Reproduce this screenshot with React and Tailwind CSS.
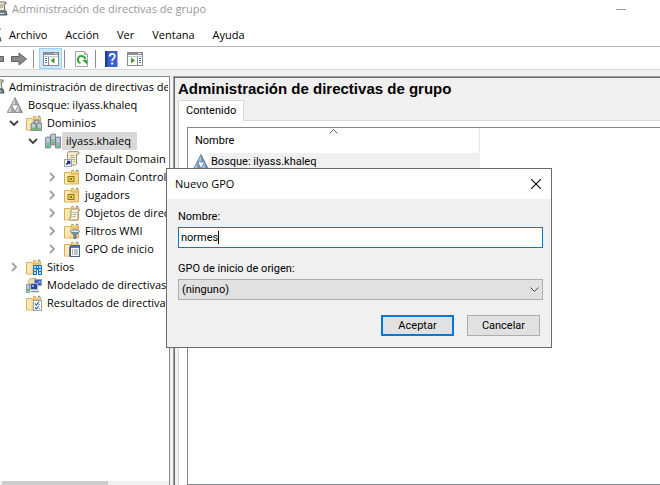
import React from "react";

const svgProps = { width: 16, height: 16, viewBox: "0 0 16 16", "aria-hidden": true, className: "shrink-0" };

function ConsoleIcon() {
  return (
    <svg {...svgProps}>
      <path d="M5 1h9v2h-2l1 7H5z" fill="#f4ecd0" stroke="#6b6b6b" />
      <path d="M7 4h4M7 6h4" stroke="#8a8a8a" />
      <path d="M3 10h11l1 4H2z" fill="#7a8894" stroke="#4c565e" />
      <rect x="4" y="12" width="8" height="1" fill="#cfd8df" />
    </svg>
  );
}

function ForestIcon({ blue }) {
  const light = blue ? "#a9c6de" : "#d2d2d2";
  const mid = blue ? "#6f96b8" : "#a2a2a2";
  const edge = blue ? "#4a6f92" : "#7d7d7d";
  return (
    <svg {...svgProps}>
      <path d="M8 .5 15.700 15.500H.3z" fill={mid} />
      <path d="M8 .8 4.500 7.800H8zM4.200 8 .7 15H4.200zM11.800 8 8.300 15h3.500z" fill={light} />
      <path d="M8 .5 15.700 15.500H.3z" fill="none" stroke={edge} strokeWidth=".7" />
      <path d="M4.600 8h6.800L8 14.600z" fill="#fff" stroke={edge} strokeWidth=".6" />
    </svg>
  );
}

function FolderShape() {
  return (
    <>
      <path d="M7.500 1.500h7v12h-7z" fill="#f2cf78" stroke="#d9ad52" />
      <path d="M10 .8h4.500v1.400H10z" fill="#fff" />
      <path d="M12 .8h1.800v1.400H12z" fill="#3f8fdc" />
      <path d="M.5 3.500h5.500l1.500 1.500h7v10H.5z" fill="#f6d98c" stroke="#d9ad52" />
      <path d="M1 4h4.500v10.500H1z" fill="#fbe9b5" />
    </>
  );
}

function Server({ x, y, h }) {
  return (
    <g>
      <path d={`M${x} ${y + 1}l1-1h4v${h}h-5z`} fill="#a3b0ba" stroke="#63737f" strokeWidth=".7" />
      <path d={`M${x + 1} ${y + 2}h3M${x + 1} ${y + 4}h3`} stroke="#eef3f6" strokeWidth=".9" />
      <rect x={x + 1.5} y={y + h - 3} width="2" height="2" fill="#3ddc35" />
    </g>
  );
}

function DomainsIcon() {
  return (
    <svg {...svgProps}>
      <FolderShape />
      <Server x={8} y={5} h={8} />
      <Server x={5} y={8} h={7.5} />
      <Server x={10.7} y={8} h={7.5} />
    </svg>
  );
}

function DomainIcon() {
  return (
    <svg {...svgProps}>
      <Server x={5.5} y={1} h={11} />
      <Server x={0.5} y={4} h={11} />
      <Server x={10.5} y={4} h={11} />
    </svg>
  );
}

function Scroll() {
  return (
    <>
      <path d="M7 5.500c0-1 .6-1.500 1.500-1.500H15c.8 0 .8 2 0 2h-1v7.500c0 1-.6 1.500-1.500 1.500H6c-1 0-1-2.500 0-2.500h1z" fill="#f8f4e4" stroke="#8f8870" strokeWidth=".9" />
      <path d="M8.500 7.500h4M8.500 9.500h4M8.500 11.500h3" stroke="#aaa48e" strokeWidth=".9" />
    </>
  );
}

function PolicyLinkIcon() {
  return (
    <svg {...svgProps}>
      <path d="M3.500 2.500C3.500 1.500 4 .7 5 .7h9c1.300 0 1.300 2.600 0 2.600h-1.500V12c0 1.200-.7 2-2 2H4z" fill="#f8f0cc" stroke="#8f8870" />
      <path d="M6 4.500h5M6 6.500h5M8 8.500h3M9 10.500h2" stroke="#b5ac8c" />
      <rect x=".5" y="8.500" width="7" height="7" fill="#fff" stroke="#9aa5ad" />
      <path d="M2.200 13.800 5 11M3 10.500h2.700v2.700" fill="none" stroke="#1a2b8f" strokeWidth="1.500" />
    </svg>
  );
}

function OuIcon() {
  return (
    <svg {...svgProps}>
      <FolderShape />
      <rect x="4" y="7.500" width="6" height="5" fill="#e6cf4d" stroke="#8d7a16" />
      <rect x="6" y="9" width="2" height="2" fill="#8d7a16" />
    </svg>
  );
}

function PolicyObjectsIcon() {
  return (
    <svg {...svgProps}>
      <FolderShape />
      <Scroll />
    </svg>
  );
}

function FiltersIcon() {
  return (
    <svg {...svgProps}>
      <FolderShape />
      <path d="M6.500 8.500 10 12v3.500h2V12l3.500-3.500z" fill="#6f95ba" stroke="#42607e" strokeWidth=".7" />
      <ellipse cx="11" cy="8.300" rx="4.600" ry="1.500" fill="#d5e5f2" stroke="#42607e" strokeWidth=".7" />
    </svg>
  );
}

function StarterIcon() {
  return (
    <svg {...svgProps}>
      <FolderShape />
      <path d="M5 6h2v9.500H5z" fill="#5c7288" />
      <rect x="6.500" y="4.500" width="9" height="11" fill="#f5f8fb" stroke="#47617c" />
      <path d="M7 5h8v2H7z" fill="#4f7ba6" />
      <path d="M10 9h4M10 11h4M10 13h4" stroke="#7e8e9e" />
      <path d="M8 9h1M8 11h1M8 13h1" stroke="#c03a2b" />
    </svg>
  );
}

function SitesIcon() {
  return (
    <svg {...svgProps}>
      <FolderShape />
      <rect x="7" y="6" width="9" height="10" fill="#1f78c4" />
      <path d="M8 7h2v2H8zM11 7h1v2h-1zM13 7h2v2h-2zM8 10h2v2H8zM13 10h2v2h-2zM8 13h2v2H8zM13 13h2v2h-2z" fill="#a9dcf8" />
      <path d="M11 11h1v5h-1z" fill="#fff" />
    </svg>
  );
}

function ModelingIcon() {
  return (
    <svg {...svgProps}>
      <path d="M2 5 4 1.500h6l-1 5-5 2z" fill="#f3e2a6" stroke="#b3a066" strokeWidth=".8" />
      <rect x="8.500" y="2.500" width="7" height="6" fill="#3f5fc4" stroke="#9aa4ad" />
      <path d="M12.500 4h2v2h-2z" fill="#8fb1f5" />
      <rect x="4.500" y="6.500" width="7" height="6" fill="#2747b5" stroke="#b2bbc3" />
      <path d="M6 8h2v2H6z" fill="#8fb1f5" />
      <path d="M5 14.500h8" stroke="#8a949d" strokeWidth="1.500" />
      <path d="M.5 7.500h3v8h-3z" fill="#c6ced4" stroke="#76828c" strokeWidth=".8" />
      <rect x="1" y="12" width="2" height="2" fill="#3ddc35" />
    </svg>
  );
}

function ResultsIcon() {
  return (
    <svg {...svgProps}>
      <FolderShape />
      <rect x="7.500" y="5.500" width="8" height="10" fill="#fff" stroke="#9aa3ab" />
      <path d="M9 8.500 10.300 10 13 6.500M9 12.500l1.300 1.300L12.500 11" fill="none" stroke="#2566ad" strokeWidth="1.200" />
      <path d="M12.500 9.500H14M12.500 13.500H14" stroke="#8a949d" />
    </svg>
  );
}

function Chevron({ open }) {
  return (
    <svg width="10" height="10" viewBox="0 0 10 10" aria-hidden="true" className="shrink-0">
      {open ? (
        <path d="M1 3l4 4 4-4" fill="none" stroke="#404040" strokeWidth="1.800" />
      ) : (
        <path d="M3 1l4 4-4 4" fill="none" stroke="#a0a0a0" strokeWidth="1.800" />
      )}
    </svg>
  );
}

const tree = [
  { pad: "pl-[7px]", icon: <ForestIcon />, label: "Bosque: ilyass.khaleq", leaf: true },
  { pad: "pl-[9px]", icon: <DomainsIcon />, label: "Dominios", open: true },
  { pad: "pl-[28px]", icon: <DomainIcon />, label: "ilyass.khaleq", open: true, selected: true },
  { pad: "pl-[64px]", icon: <PolicyLinkIcon />, label: "Default Domain Policy", leaf: true },
  { pad: "pl-[47px]", icon: <OuIcon />, label: "Domain Controllers" },
  { pad: "pl-[47px]", icon: <OuIcon />, label: "jugadors" },
  { pad: "pl-[47px]", icon: <PolicyObjectsIcon />, label: "Objetos de directiva de grupo" },
  { pad: "pl-[47px]", icon: <FiltersIcon />, label: "Filtros WMI" },
  { pad: "pl-[47px]", icon: <StarterIcon />, label: "GPO de inicio" },
  { pad: "pl-[9px]", icon: <SitesIcon />, label: "Sitios" },
  { pad: "pl-[26px]", icon: <ModelingIcon />, label: "Modelado de directivas de grupo", leaf: true },
  { pad: "pl-[26px]", icon: <ResultsIcon />, label: "Resultados de directivas de grupo", leaf: true },
];

function TreeRow({ pad, icon, label, open, leaf, selected }) {
  return (
    <li role="treeitem" aria-selected={!!selected} className={"flex h-[18px] items-center whitespace-nowrap " + pad}>
      {!leaf && (
        <span className="mr-[7px] flex">
          <Chevron open={open} />
        </span>
      )}
      {icon}
      <span className={"ml-px h-[18px] pr-[6px] pl-1 leading-[18px] " + (selected ? "bg-[#d9d9d9]" : "")}>{label}</span>
    </li>
  );
}

function PaneIcon({ right }) {
  return (
    <svg {...svgProps}>
      <rect x=".5" y="1.500" width="15" height="13" fill="#fff" stroke="#8a8a8a" />
      <path d="M1 2h14v2H1z" fill="#8d9299" />
      <path d="M11 2.500h3" stroke="#e8e8e8" />
      <path d="M1 5.500h14" stroke="#c4c8cc" />
      {right ? (
        <>
          <path d="M10.500 6v8" stroke="#8a8a8a" />
          <path d="M12 7.500h2M12 9.500h2M12 11.500h2" stroke="#3f6fa8" />
          <path d="M4 6.500v6L8 9.500z" fill="#35a52c" />
        </>
      ) : (
        <>
          <path d="M5.500 6v8" stroke="#8a8a8a" />
          <path d="M2 7.500h2M2 9.500h2M2 11.500h2" stroke="#3f6fa8" />
          <path d="M11.500 6.500v6L7.500 9.500z" fill="#35a52c" />
        </>
      )}
    </svg>
  );
}

function RefreshIcon() {
  return (
    <svg {...svgProps}>
      <path d="M2.500.5h9l3 3v12h-12z" fill="#fff" stroke="#a5a5a5" />
      <path d="M11.500.5v3h3" fill="none" stroke="#a5a5a5" />
      <path d="M7.500 12.200A3.700 3.700 0 1 1 12.200 8.500" fill="none" stroke="#33a83a" strokeWidth="1.900" />
      <path d="M9.200 9h5v4.500z" fill="#33a83a" />
    </svg>
  );
}

function HelpIcon() {
  return (
    <svg {...svgProps}>
      <rect x="2" y="0" width="12.500" height="16" fill="#3a5fcb" />
      <path d="M2 0h2.500v16H2z" fill="#1f3c98" />
      <path d="M6.700 5.500C6.700 2 11.800 2 11.800 5.200 11.800 7.500 9.200 7.300 9.200 10" fill="none" stroke="#fff" strokeWidth="1.800" />
      <rect x="8.200" y="11.500" width="2" height="2" fill="#fff" />
    </svg>
  );
}

function ArrowShape({ back }) {
  return (
    <svg {...svgProps}>
      <path
        d={back ? "M15.500 5.500H8V2L1 8l7 6v-3.500h7.500z" : "M.5 5.500H8V2L15.500 8 8 14v-3.500H.5z"}
        fill="#8a8a8a"
        stroke="#5f5f5f"
      />
    </svg>
  );
}

function Separator() {
  return <span className="h-[18px] w-px shrink-0 bg-[#8d8d8d]" />;
}

function Toolbar() {
  return (
    <div role="toolbar" aria-label="Barra de herramientas" className="flex h-[23px] shrink-0 items-center overflow-hidden border-b border-[#d9d9d9] pt-px">
      <button aria-label="Atrás" className="-ml-3 flex"><ArrowShape back /></button>
      <button aria-label="Adelante" className="mr-[6px] ml-[7px] flex"><ArrowShape /></button>
      <Separator />
      <button aria-label="Mostrar árbol" className="mr-[2px] ml-[5px] flex h-[21px] w-[23px] items-center justify-center border border-[#99d1ff] bg-[#cce8ff]">
        <PaneIcon />
      </button>
      <Separator />
      <button aria-label="Actualizar" className="mr-[6px] ml-2 flex"><RefreshIcon /></button>
      <Separator />
      <button aria-label="Ayuda" className="mr-2 ml-[7px] flex"><HelpIcon /></button>
      <button aria-label="Panel de acciones" className="flex"><PaneIcon right /></button>
    </div>
  );
}

function ContentPane() {
  return (
    <main className="ml-[3px] flex min-w-0 flex-1 flex-col border-t border-l border-[#a0a0a0]">
      <div className="flex min-h-0 flex-1 flex-col border-t border-l border-[#696969] bg-[#f0f0f0] pl-[3px]">
        <h1 className="h-[22px] font-['Liberation_Sans',sans-serif] text-[15px] leading-[22px] font-bold whitespace-nowrap">
          Administración de directivas de grupo
        </h1>
        <div role="tablist" className="flex h-[21px] shrink-0">
          <button role="tab" aria-selected="true" className="border-t border-r border-l border-[#d9d9d9] bg-white px-[7px] font-['Roboto',sans-serif]">
            Contenido
          </button>
          <span className="flex-1 border-b border-[#d9d9d9]" />
        </div>
        <div className="flex min-h-0 flex-1 flex-col border-l border-[#d9d9d9] bg-white pt-[6px] pl-[8px]">
          <div className="flex-1 border-t border-b border-l border-[#828790] font-['Roboto',sans-serif]">
            <table className="w-[292px] table-fixed border-collapse">
              <thead>
                <tr>
                  <th className="relative h-[25px] border-r border-[#e5e5e5] p-0 pl-[7px] text-left font-normal">
                    <svg width="9" height="5" viewBox="0 0 9 5" aria-hidden="true" className="absolute inset-x-0 top-px mx-auto">
                      <path d="M.5 4.500l4-4 4 4" fill="none" stroke="#606060" />
                    </svg>
                    Nombre
                  </th>
                </tr>
              </thead>
              <tbody>
                <tr>
                  <td className="p-0">
                    <div className="flex h-[18px] items-center pl-[5px]">
                      <ForestIcon blue />
                      <span className="flex-1 bg-[#f0f0f0] pl-[2px] leading-[18px]">Bosque: ilyass.khaleq</span>
                    </div>
                  </td>
                </tr>
              </tbody>
            </table>
          </div>
        </div>
      </div>
    </main>
  );
}

function NewGpoDialog() {
  return (
    <div role="dialog" aria-labelledby="dlg-title" className="absolute top-[168px] left-[166px] w-[386px] border border-[#696b70] bg-[#f0f0f0] font-['Roboto',sans-serif]">
      <div className="flex h-[30px] items-center justify-between bg-white pr-[10px] pl-[8px]">
        <h2 id="dlg-title" className="font-['Open_Sans',sans-serif]">Nuevo GPO</h2>
        <button aria-label="Cerrar">
          <svg width="10" height="10" viewBox="0 0 10 10" aria-hidden="true">
            <path d="M0 0l10 10M10 0L0 10" stroke="#000" strokeWidth="1.100" />
          </svg>
        </button>
      </div>
      <form className="pt-[10px] pr-2 pb-[11px] pl-[11px]" onSubmit={(e) => e.preventDefault()}>
        <label htmlFor="gpo-name" className="block leading-[16px]">Nombre:</label>
        <div className="mt-[2px] flex h-[21px] items-center border border-[#0078d7] bg-white pl-[2px]">
          <input id="gpo-name" defaultValue="normes" className="[field-sizing:content] p-0 outline-none" />
          <span className="h-[13px] w-px bg-black" />
        </div>
        <label htmlFor="gpo-source" className="mt-[13px] block leading-[16px]">GPO de inicio de origen:</label>
        <div className="relative mt-[2px]">
          <select id="gpo-source" className="block h-[21px] w-full appearance-none border border-[#adadad] bg-[#e1e1e1] pl-[3px] leading-[16px]">
            <option>(ninguno)</option>
          </select>
          <svg width="9" height="6" viewBox="0 0 9 6" aria-hidden="true" className="pointer-events-none absolute top-[8px] right-[4px]">
            <path d="M.5.5l4 4 4-4" fill="none" stroke="#404040" />
          </svg>
        </div>
        <div className="mt-[15px] flex justify-end gap-[13px] pr-[3px]">
          <button type="submit" className="h-[21px] w-[73px] border-2 border-[#0078d7] bg-[#e1e1e1] leading-[16px]">Aceptar</button>
          <button type="button" className="h-[21px] w-[73px] border border-[#adadad] bg-[#e1e1e1] leading-[16px]">Cancelar</button>
        </div>
      </form>
    </div>
  );
}

export default function App() {
  return (
    <div className="relative flex h-screen flex-col overflow-hidden bg-white font-['Open_Sans',sans-serif] text-[11px] leading-[16px] text-black">
      <header className="flex h-[18px] shrink-0 items-center justify-between text-[#999999]">
        <div className="flex items-center">
          <span className="-ml-2 flex"><ConsoleIcon /></span>
          <span className="ml-1">Administración de directivas de grupo</span>
        </div>
        <button aria-label="Minimizar" className="mr-[34px] h-px w-[10px] bg-[#999999]" />
      </header>
      <nav className="flex h-[29px] shrink-0 items-end border-b border-[#b4b4b4] pb-[3px]">
        <span className="-ml-[14px] flex"><ConsoleIcon /></span>
        <div className="ml-[7px] flex gap-[18px]">
          {["Archivo", "Acción", "Ver", "Ventana", "Ayuda"].map((m) => (
            <button key={m}>{m}</button>
          ))}
        </div>
      </nav>
      <Toolbar />
      <div className="flex min-h-0 flex-1 bg-[#f0f0f0] pt-[6px]">
        <aside className="flex w-[170px] shrink-0 flex-col overflow-hidden border-t border-r border-[#828790] bg-white">
          <ul role="tree" aria-label="Árbol de consola" className="min-h-0 w-[168px] flex-1 overflow-hidden pt-px">
            <li role="treeitem" className="flex h-[18px] items-center whitespace-nowrap">
              <span className="-ml-[11px] flex"><ConsoleIcon /></span>
              <span className="ml-1">Administración de directivas de grupo</span>
            </li>
            {tree.map((row) => (
              <TreeRow key={row.label} {...row} />
            ))}
          </ul>
          <div className="h-[4px] bg-[#f0f0f0] pl-[2px]">
            <div className="h-full w-[106px] bg-[#cdcdcd]" />
          </div>
        </aside>
        <ContentPane />
      </div>
      <NewGpoDialog />
    </div>
  );
}
